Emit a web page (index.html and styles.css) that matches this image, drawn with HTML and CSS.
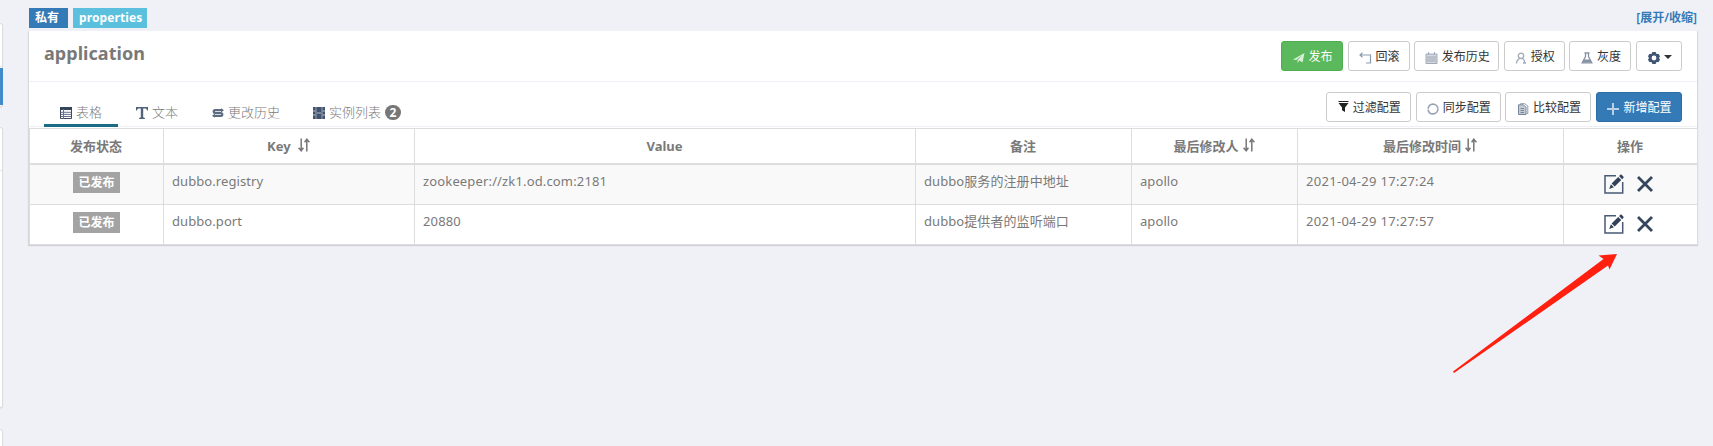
FILE: index.html
```html
<!DOCTYPE html>
<html lang="zh-CN">
<head>
<meta charset="utf-8">
<title>application</title>
<link rel="stylesheet" href="styles.css">
</head>
<body>
<svg width="0" height="0" class="defs">
  <symbol id="edit" viewBox="0 0 20 20"><path d="M12 1.700H1v17.300h17.700V8" fill="none" stroke="#4a5a73" stroke-width="1.500"/><path d="M5.200 14.900l1.700-4.600 3 3zM7.600 9.500l6.600-6.600 3.100 3.100-6.600 6.600zM15 2.100l1.200-1.200c.5-.5 1.100-.5 1.600 0l1.500 1.500c.5.5.5 1.100 0 1.600l-1.200 1.200z" fill="#324158"/></symbol>
  <symbol id="close" viewBox="0 0 16 16"><path d="M1 1l14 14M15 1L1 15" stroke="#34455e" stroke-width="2.800" fill="none"/></symbol>
  <symbol id="sort" viewBox="0 0 12 14"><path d="M3.200 .5v12M.6 9.800l2.600 3 2.200-3M8.800 13.500v-12M6.600 4.200l2.200-3 2.700 3" fill="none" stroke="#777" stroke-width="1.500"/></symbol>
</svg>
<div class="page">
  <aside class="side">
    <div class="box first"><div class="line"></div><div class="active"></div></div>
    <div class="box second"><div class="line"></div></div>
    <div class="box third"></div>
  </aside>
  <main class="main">
    <div class="labels">
      <span class="label primary">私有</span><span class="label info">properties</span>
      <a class="toggle">[展开/收缩]</a>
    </div>
    <section class="panel">
      <header class="head">
        <b class="name">application</b>
        <div class="buttons">
          <button class="btn success w62"><svg width="12" height="12" viewBox="0 0 12 12"><path d="M0 7.500L11.500 1 9.500 10.500 6.300 8.600 4.600 11V8.200L9.400 3 3.400 8z" fill="#d9f0d9"/></svg><span>发布</span></button>
          <button class="btn w62"><svg width="13" height="12" viewBox="0 0 13 12"><path d="M1 3h10.500v8H7M3.500.7L1 3l2.500 2.300" fill="none" stroke="#8d9bb0" stroke-width="1.200"/></svg><span>回滚</span></button>
          <button class="btn w85"><svg width="13" height="12" viewBox="0 0 13 12"><path d="M1 2h11v9.500H1zM3.500 0v3M9.500 0v3" fill="#d3d7de" stroke="#a2aab8"/><path d="M2 5h9M2 7h9M2 9h9" stroke="#a2aab8"/></svg><span>发布历史</span></button>
          <button class="btn w61"><svg width="12" height="12" viewBox="0 0 12 12"><circle cx="6" cy="3.800" r="2.700" fill="none" stroke="#a3abb8" stroke-width="1.300"/><path d="M1.500 11.500c0-2.500 1.200-4 3-5M7.500 6.500c2 1 2 2.500 2.200 4M8 11h3" fill="none" stroke="#a3abb8" stroke-width="1.300"/></svg><span>授权</span></button>
          <button class="btn w62"><svg width="12" height="12" viewBox="0 0 12 12"><path d="M3.500 1h5M4.500 1v3.500L1.200 10.800h9.600L7.500 4.500V1" fill="none" stroke="#8792a3" stroke-width="1.300"/><path d="M3 7.500h6l1.500 3h-9z" fill="#8792a3"/></svg><span>灰度</span></button>
          <button class="btn w46"><svg width="12" height="12" viewBox="0 0 12 12"><path d="M4.300 0h3.400l.5 1.700 2.500.3L12 4.300 11 6l1 1.700-1.300 2.300-2.500.3-.5 1.700H4.300l-.5-1.700-2.500-.3L0 7.700 1 6 0 4.300 1.300 2l2.500-.3zM6 3.600a2.400 2.400 0 100 4.800 2.400 2.400 0 000-4.800z" fill="#415675" fill-rule="evenodd"/></svg><i class="caret"></i></button>
        </div>
      </header>
      <div class="bar">
        <nav class="tabs">
          <a class="tab on"><svg width="12" height="12" viewBox="0 0 12 12"><path d="M.5.5h11v11H.5z" fill="#fff" stroke="#3b4a60"/><path d="M0 0h12v3H0z" fill="#34445c"/><path d="M1 5.300h10M1 7.400h10M1 9.500h10M3.500 2v10" stroke="#65738a"/></svg>表格</a>
          <a class="tab"><svg width="12" height="12" viewBox="0 0 12 12"><path d="M0 0h12v3.500h-.8L10 1.600H7.200v8.700l1.700.7v1H3.100v-1l1.700-.7V1.600H2L.8 3.500H0z" fill="#52627a"/></svg>文本</a>
          <a class="tab"><svg width="12" height="12" viewBox="0 0 12 12"><path d="M10.500 3.200H3.200c-2 0-2 2.800 0 2.800h5.600c2 0 2 2.800 0 2.800H1.500" fill="none" stroke="#5d6b81" stroke-width="2.200"/><path d="M9 1.200l3 2-3 2zM3 6.800L0 8.800l3 2z" fill="#5d6b81"/></svg>更改历史</a>
          <a class="tab"><svg width="12" height="12" viewBox="0 0 12 12"><path d="M0 0h12v12H0z" fill="#42536d"/><path d="M3 0v12M9 0v12" stroke="#aeb7c4" stroke-width=".8"/><path d="M0 4h2.500M0 8h2.500M9.500 4H12M9.500 8H12M4 6h4" stroke="#c5ccd6" stroke-width=".9"/></svg>实例列表<span class="badge">2</span></a>
        </nav>
        <div class="buttons low">
          <button class="btn w85"><svg class="up" width="11" height="12" viewBox="0 0 11 12"><path d="M.5 0h10v1H.5zM.5 2h10L7 6.500V11L4 9.200V6.500z" fill="#222"/></svg><span>过滤配置</span></button>
          <button class="btn w85"><svg width="12" height="12" viewBox="0 0 12 12"><circle cx="6" cy="6" r="4.900" fill="none" stroke="#97a2b2" stroke-width="1.600" stroke-dasharray="14.400 1"/></svg><span>同步配置</span></button>
          <button class="btn w86"><svg width="12" height="12" viewBox="0 0 12 12"><path d="M3.500 1.500V.7h4.300L10.800 3v7.500H9.500" fill="none" stroke="#909baa"/><path d="M1.500 1.800h5L9 4.300v7.200H1.500z" fill="#c5cbd4" stroke="#7a879a"/><path d="M3.500 5.500H7M3.500 7.500H7M3.500 9.500H7" stroke="#7a879a"/></svg><span>比较配置</span></button>
          <button class="btn blue w86"><svg width="12" height="12" viewBox="0 0 12 12"><path d="M6 0v12M0 6h12" stroke="#b9d0e6" stroke-width="2"/></svg><span>新增配置</span></button>
        </div>
      </div>
      <table class="grid">
        <colgroup><col class="c1"><col class="c2"><col class="c3"><col class="c4"><col class="c5"><col class="c6"><col class="c7"></colgroup>
        <thead><tr><th>发布状态</th><th>Key <svg class="sort far" width="12" height="14"><use href="#sort"/></svg></th><th>Value</th><th>备注</th><th>最后修改人<svg class="sort" width="12" height="14"><use href="#sort"/></svg></th><th>最后修改时间<svg class="sort" width="12" height="14"><use href="#sort"/></svg></th><th>操作</th></tr></thead>
        <tbody>
          <tr><td class="mid"><span class="state">已发布</span></td><td>dubbo.registry</td><td class="url">zookeeper://zk1.od.com:2181</td><td>dubbo服务的注册中地址</td><td>apollo</td><td class="time">2021-04-29 17:27:24</td><td><div class="ops"><svg width="20" height="20"><use href="#edit"/></svg><svg width="16" height="16"><use href="#close"/></svg></div></td></tr>
          <tr><td class="mid"><span class="state">已发布</span></td><td>dubbo.port</td><td class="url">20880</td><td>dubbo提供者的监听端口</td><td>apollo</td><td class="time">2021-04-29 17:27:57</td><td><div class="ops"><svg width="20" height="20"><use href="#edit"/></svg><svg width="16" height="16"><use href="#close"/></svg></div></td></tr>
        </tbody>
      </table>
    </section>
  </main>
  <svg class="arrow" width="166" height="120" viewBox="0 0 166 120"><path d="M0 117.500L150.500 5 145.500 1.500 164 0 156.500 15.500 155 11.500 1 119z" fill="#ff2010"/></svg>
</div>
</body>
</html>
```
FILE: styles.css
```css
* { box-sizing: border-box; }
body { margin: 0; background: #f0f1f7; color: #797979; font: 13px/18px "Noto Sans", "Noto Sans CJK SC", sans-serif; overflow: hidden; }
.defs { position: absolute; }
.page { display: flex; height: 446px; position: relative; }
.side { width: 28px; padding-top: 23px; flex: none; }
.box { width: 3px; background: #fff; border: 1px solid #dcdce0; border-left: 0; border-radius: 0 4px 4px 0; box-shadow: 0 1px 1px #0001; }
.first { height: 84px; padding-top: 42px; margin-bottom: 20px; }
.second { height: 281px; padding-top: 42px; margin-bottom: 21px; }
.third { height: 30px; }
.line { height: 1px; background: #e6e6e9; }
.active { margin-top: 1px; width: 3px; height: 37px; background: #428bca; }
.main { width: 1670px; padding-top: 8px; }
.labels { display: flex; height: 23px; padding-left: 1px; align-items: flex-start; }
.label { height: 20px; line-height: 19px; color: #fff; font-weight: 700; font-size: 12px; padding-left: 6px; }
.primary { width: 39px; background: #337ab7; margin-right: 5px; }
.info { width: 74px; background: #5bc0de; letter-spacing: .1px; }
.toggle { margin-left: auto; color: #337ab7; font-weight: 600; font-size: 12px; line-height: 19px; padding-right: 1px; }
.panel { background: #fff; border: 1px solid #d9d9dc; border-top: 0; border-bottom: 0; box-shadow: 0 1px 1px #0002; }
.head { height: 51px; border-bottom: 1px solid #eff0f5; display: flex; justify-content: space-between; padding: 10px 15px 0; }
.name { font-size: 18px; line-height: 24px; letter-spacing: .05px; }
.buttons { display: flex; gap: 4.600px; }
.btn { height: 30px; border: 1px solid #ccc; border-radius: 3px; background: #fff; padding: 0 0 0 1px; color: #333; font: 12px/18px "Noto Sans", "Noto Sans CJK SC", sans-serif; display: flex; align-items: center; justify-content: center; gap: 4px; white-space: nowrap; }
.btn svg { margin-top: 3px; flex: none; }
.btn .up { margin-top: 0; }
.btn span { padding-top: 1px; }
.w46 { width: 46px; } .w61 { width: 61px; } .w62 { width: 62px; } .w85 { width: 85px; } .w86 { width: 86px; }
.success { background: #5cb85c; border-color: #4cae4c; color: #fff; }
.blue { background: #337ab7; border-color: #2e6da4; color: #fff; }
.caret { border: 4px solid transparent; border-top-color: #333; border-bottom: 0; margin-top: 2px; }
.bar { height: 45px; border-bottom: 1px solid #eff0f5; display: flex; justify-content: space-between; padding: 0 15px; }
.low { padding-top: 10px; }
.tabs { display: flex; padding-top: 15px; }
.tab { height: 30px; padding: 6px 15px 0 16px; display: flex; gap: 4px; margin-right: 3px; line-height: 18px; font-weight: 300; font-family: "Noto Sans CJK SC", sans-serif; }
.tab svg { margin-top: 4px; }
.on { border-bottom: 3px solid #1a6b84; margin-right: 2px; width: 74px; }
.tab:last-child { margin-left: -1px; }
.badge { width: 16px; height: 15px; margin: 2px 0 0; border-radius: 8px; background: #777; color: #fff; font: bold 12px/15px "Noto Sans", sans-serif; text-align: center; }
.grid { width: 1668px; table-layout: fixed; border-collapse: collapse; margin-top: 1px; }
.c1 { width: 134px; } .c2 { width: 251px; } .c3 { width: 501px; } .c4 { width: 216px; } .c5 { width: 166px; } .c6 { width: 266px; } .c7 { width: 134px; }
.grid th, .grid td { border: 1px solid #ddd; }
.grid th { height: 35px; border-bottom-width: 2px; padding: 0 1px 0 0; text-align: center; line-height: 18px; }
.grid td { height: 40px; padding: 8px 8px 0; vertical-align: top; letter-spacing: .08px; line-height: 17px; }
.grid tbody tr:first-child td { height: 41px; }
.grid .url { letter-spacing: .15px; }
.grid .time { letter-spacing: .29px; }
.grid tbody tr:first-child { background: #f9f9f9; }
.grid .mid { text-align: center; padding-top: 7px; }
.sort { vertical-align: -1px; margin-left: 4px; }
.far { margin-left: 4px; }
.state { display: inline-block; width: 47px; height: 21px; background: #a3a3a3; color: #fff; font-weight: 700; font-size: 12px; line-height: 21px; }
.ops { display: flex; gap: 13px; align-items: center; padding: 1px 0 0 32px; }
.arrow { position: absolute; left: 1453px; top: 254px; }
```
